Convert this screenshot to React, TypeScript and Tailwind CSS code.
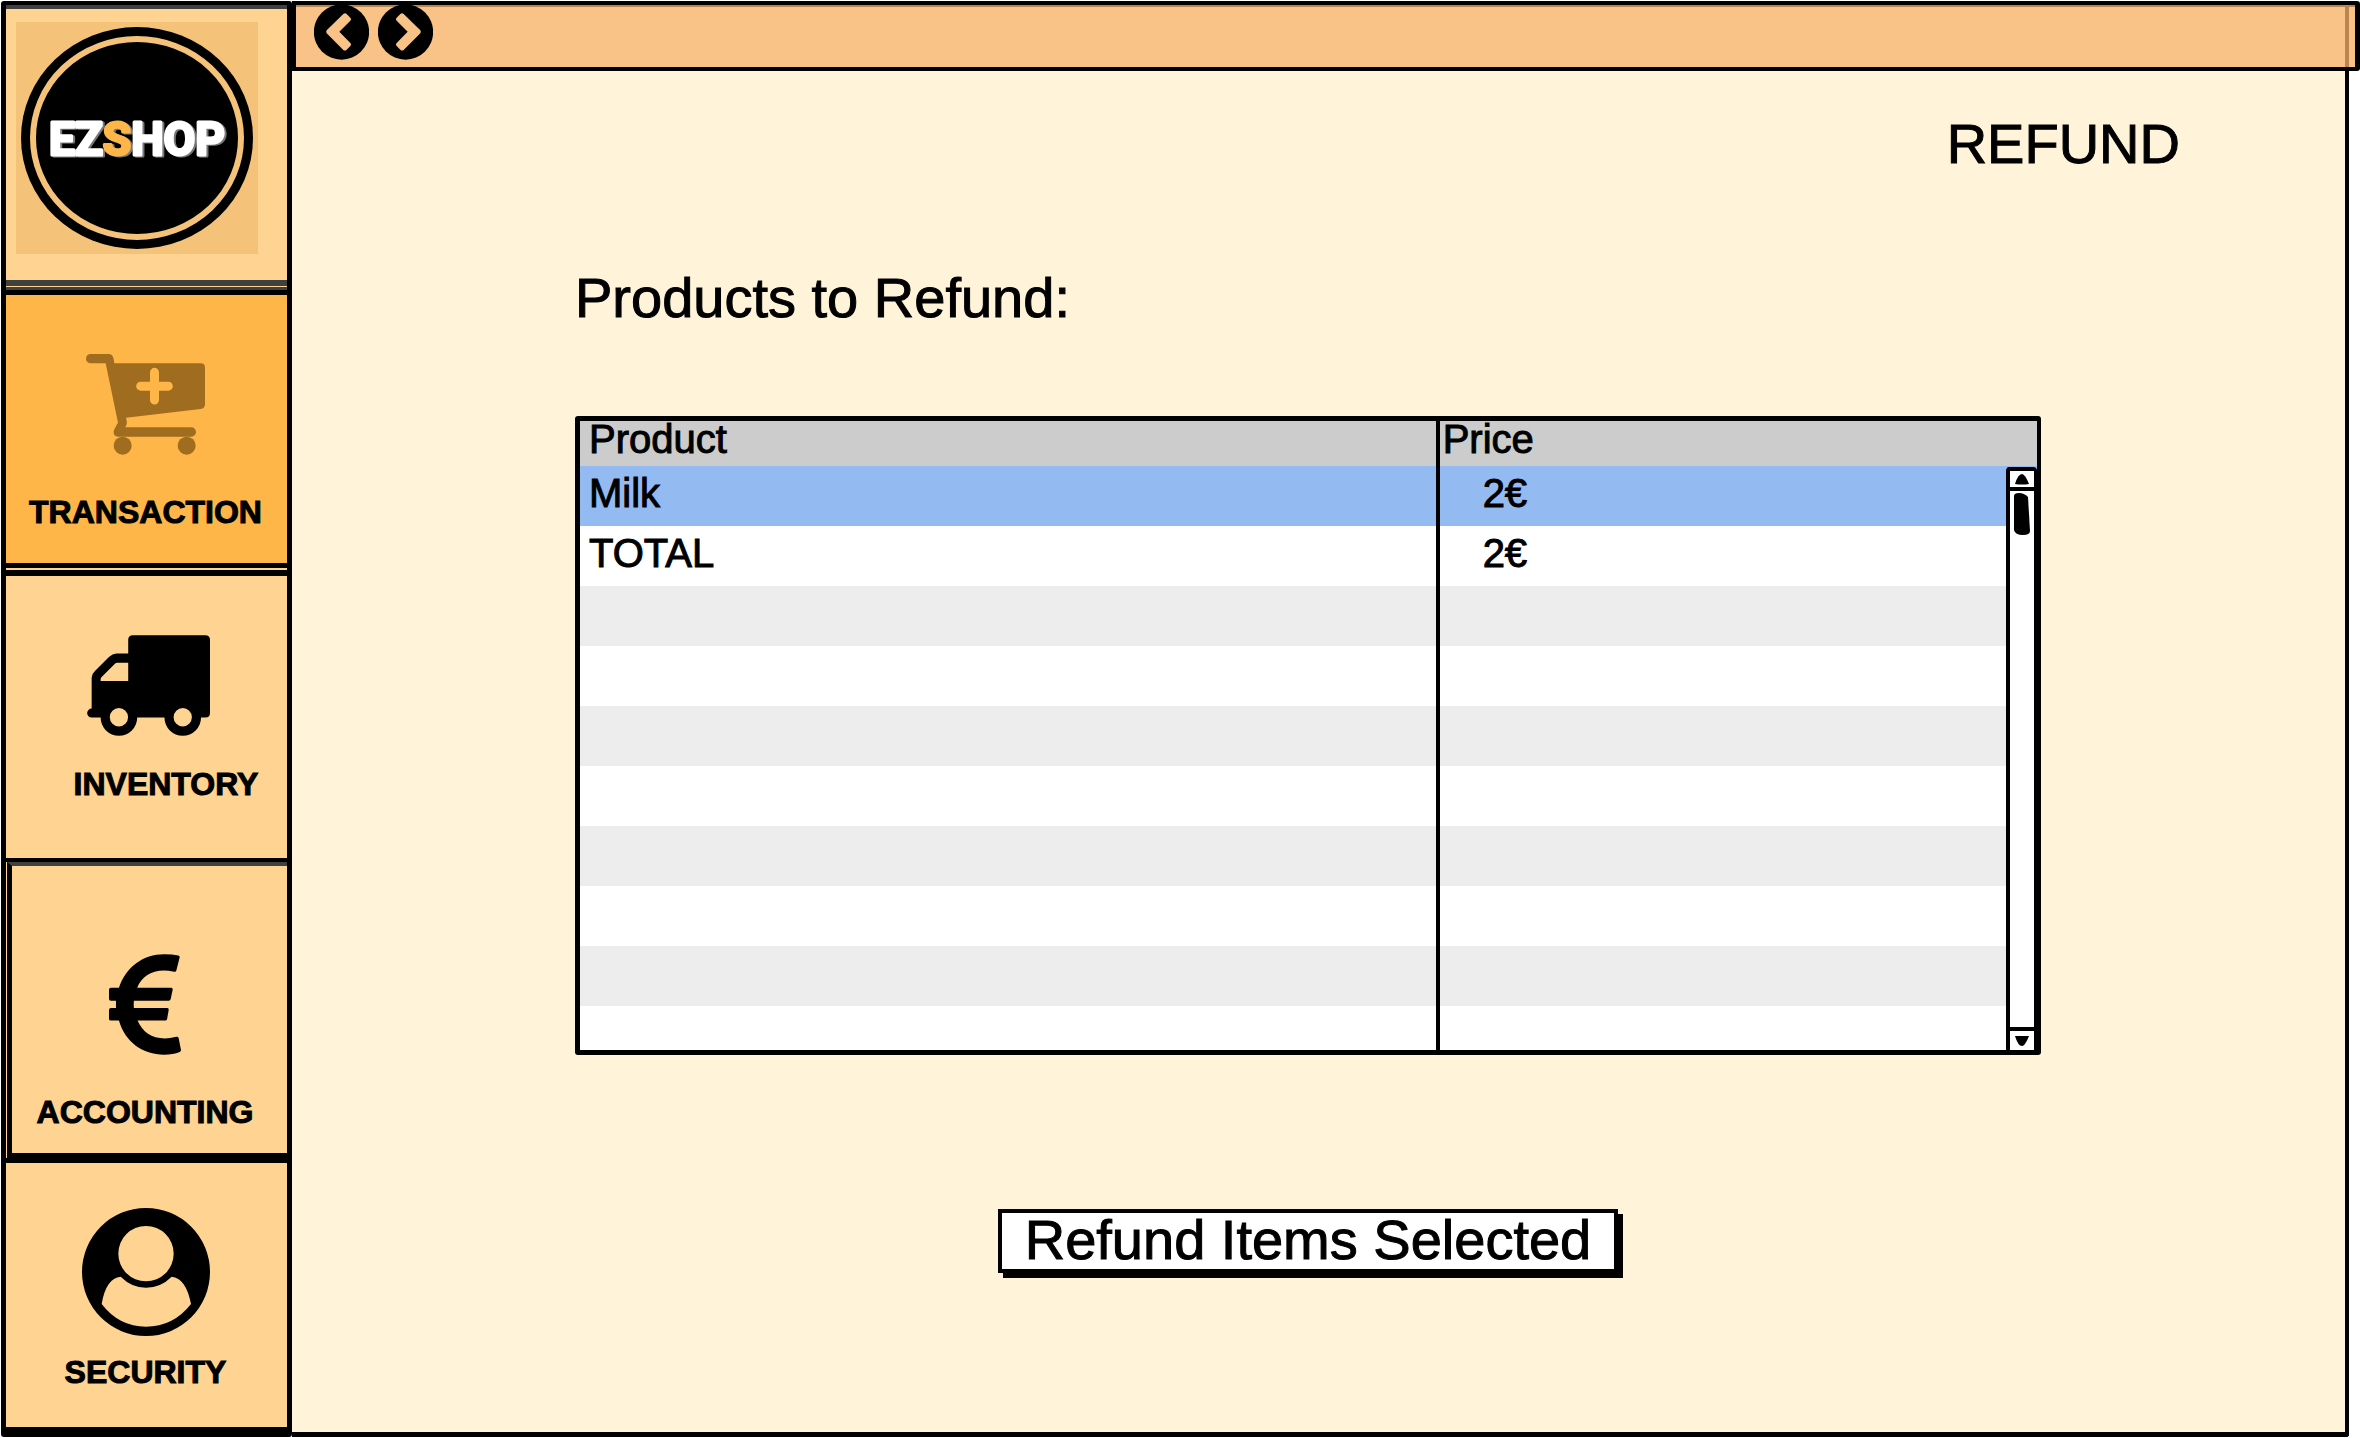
import type { ReactNode } from "react";

function Logo() {
  return (
    <svg viewBox="0 0 242 232" className="h-[232px] w-[242px]" role="img" aria-label="EZSHOP">
      <rect width="242" height="232" fill="#f5c27a" />
      <ellipse cx="121" cy="116" rx="116" ry="111" fill="#000" />
      <ellipse cx="121" cy="116" rx="104" ry="99" fill="none" stroke="#f5c27a" strokeWidth="6" />
      <text
        x="121"
        y="133"
        className="drop-shadow-[2px_1px_0_#77777b]"
        fontFamily="Roboto, 'Liberation Sans', sans-serif"
        fontWeight="700"
        fontSize="46"
        textAnchor="middle"
        strokeWidth="3"
        strokeLinejoin="round"
        fill="#fff"
        stroke="#fff"
      >
        EZ
        <tspan fill="#ffb648" stroke="#ffb648">S</tspan>
        HOP
      </text>
    </svg>
  );
}

function CartIcon() {
  return (
    <svg viewBox="258 253 357 303" className="h-[101px] w-[119px]" fill="#9f6c20" aria-hidden="true">
      <path
        fillRule="evenodd"
        d="M272 253H326Q338 253 341 268L343 281H602Q615 281 615 294V404Q615 416 602 418L378 444Q382 458 380 464L376 473H574a14 14 0 0 1 0 28H354Q341 501 341 487Q341 480 354 459L317 281H272a14 14 0 0 1 0-28zM450 308V336H422a13.500 13.500 0 0 0 0 27H450V391a13.500 13.500 0 0 0 27 0V363H505a13.500 13.500 0 0 0 0-27H477V308a13.500 13.500 0 0 0-27 0z"
      />
      <circle cx="368" cy="528" r="27" />
      <circle cx="560" cy="528" r="27" />
    </svg>
  );
}

function TruckIcon() {
  return (
    <svg viewBox="260 229 370 303" className="h-[101px] w-[123px]" aria-hidden="true">
      <path
        fillRule="evenodd"
        d="M398 229H616Q630 229 630 243V463Q630 477 616 477H603A55 55 0 0 1 493 477H411A55 55 0 0 1 301 477H274a13.500 13.500 0 0 1 0-27V357Q274 346 284 337L326 295Q337 284 348 284H384V243Q384 229 398 229zM384 312H350Q347 312 344 315L304 355Q301 358 301 362V367H384zM328.500 476a27.500 27.500 0 1 0 55 0a27.500 27.500 0 1 0-55 0zM520.500 476a27.500 27.500 0 1 0 55 0a27.500 27.500 0 1 0-55 0z"
      />
    </svg>
  );
}

function EuroIcon() {
  return (
    <svg viewBox="327 315 217 303" className="h-[101px] w-[72px]" aria-hidden="true">
      <path d="M540 324L530 364Q529 369 524 368Q505 364 493 364C452 364 424 385 412 416H515Q519 416 519 421L513 450Q512 455 507 455H402Q401 466 402 477H503Q507 477 507 482L502 511Q501 515 497 515H413C428 549 455 569 495 569Q510 569 530 564Q536 563 537 568L544 604Q544 609 540 610Q520 618 493 618C428 618 376 580 357 515H333Q327 515 327 510V483Q327 477 333 477H348V455H333Q327 455 327 450V422Q327 416 333 416H357C378 353 430 315 493 315Q518 315 536 319Q540 320 540 324z" />
    </svg>
  );
}

function UserIcon() {
  return (
    <svg viewBox="246 205 384 384" className="size-32" aria-hidden="true">
      <path
        fillRule="evenodd"
        d="M246 397a192 192 0 1 0 384 0a192 192 0 1 0-384 0zM355 342a83 83 0 1 0 166 0a83 83 0 1 0-166 0zM305 493Q318 415 362 411Q395 444 438 444Q482 444 515 411Q558 415 573 493Q520 561 438 561Q357 561 305 493z"
      />
    </svg>
  );
}

function ChevronCircle({ flipped = false }: { flipped?: boolean }) {
  return (
    <svg
      viewBox="942 14 165 166"
      className={flipped ? "h-14 w-[55px] -scale-x-100" : "h-14 w-[55px]"}
      aria-hidden="true"
    >
      <circle cx="1024.500" cy="97" r="83" />
      <path
        fill="#f9c387"
        d="M1030 43Q1035 39 1040 43L1051 54Q1056 58 1051 63L1018 96L1051 130Q1056 134 1051 139L1040 150Q1035 155 1030 151L980 101Q977 96 980 92z"
      />
    </svg>
  );
}

function NavItem({ label, icon, className }: { label: string; icon: ReactNode; className: string }) {
  return (
    <button type="button" className={`flex flex-col items-center text-[32px] leading-10 font-bold ${className}`}>
      {icon}
      <span>{label}</span>
    </button>
  );
}

const rows = [
  { product: "Milk", price: "2€", tone: "bg-[#94baf2]" },
  { product: "TOTAL", price: "2€", tone: "bg-white" },
  { product: "", price: "", tone: "bg-[#ededed]" },
  { product: "", price: "", tone: "bg-white" },
  { product: "", price: "", tone: "bg-[#ededed]" },
  { product: "", price: "", tone: "bg-white" },
  { product: "", price: "", tone: "bg-[#ededed]" },
  { product: "", price: "", tone: "bg-white" },
  { product: "", price: "", tone: "bg-[#ededed]" },
];

function ProductTable() {
  return (
    <div className="relative rounded-[3px] border-[5px] border-r-4 border-black bg-white">
      <table className="w-full table-fixed border-separate border-spacing-0 text-left text-[40px]">
        <thead>
          <tr className="h-[45px] bg-[#ccc] align-top leading-9">
            <th scope="col" className="w-[59%] border-r-4 border-black p-0 pl-[9px] font-normal">
              Product
            </th>
            <th scope="col" className="p-0 pl-[3px] font-normal">
              Price
            </th>
          </tr>
        </thead>
        <tbody>
          {rows.map((row, i) => (
            <tr key={i} className={`h-15 align-top leading-[54px] ${row.tone}`}>
              <td className="border-r-4 border-black p-0 pl-[9px]">{row.product}</td>
              <td className="p-0 pl-[43px]">{row.price}</td>
            </tr>
          ))}
          <tr className="h-11 bg-white">
            <td className="border-r-4 border-black p-0" />
            <td className="p-0" />
          </tr>
        </tbody>
      </table>
      <div className="absolute top-[46px] right-0 bottom-0 flex w-[31px] flex-col rounded-t-sm border-t-4 border-r-3 border-l-4 border-black bg-white">
        <button type="button" aria-label="Scroll up" className="flex h-5 items-center justify-center border-b-4 border-black">
          <svg viewBox="0 0 16 12" className="h-3 w-4" aria-hidden="true">
            <path d="M1 11Q4 1 8 1Q11 1 15 11Q8 12 1 11z" />
          </svg>
        </button>
        <div className="flex flex-1 justify-center pt-0.5">
          <svg viewBox="0 0 16 42" className="h-[42px] w-4" aria-hidden="true">
            <path d="M0 3Q0 0 5 0Q10 0 14 4L16 38Q16 42 9 42Q1 42 0 37z" />
          </svg>
        </div>
        <button type="button" aria-label="Scroll down" className="flex h-[23px] items-center justify-center border-t-4 border-black">
          <svg viewBox="0 0 16 12" className="h-3 w-4" aria-hidden="true">
            <path d="M1 1H15Q11 11 8 11Q4 11 1 1z" />
          </svg>
        </button>
      </div>
    </div>
  );
}

export default function App() {
  return (
    <div className="flex min-h-screen bg-white py-px font-['Liberation_Sans',Arial,sans-serif] text-black [-webkit-text-stroke:1px_#000]">
      <aside className="ml-px flex w-[291px] shrink-0 flex-col rounded-[3px] border-x-[5px] border-t-4 border-b-[10px] border-black bg-[#ffd391]">
        <div className="flex h-[285px] flex-col border-t-4 border-[#404040]">
          <div className="pt-[13px] pl-[10px]">
            <Logo />
          </div>
          <div className="mt-auto h-[6px] bg-[#404040]" />
          <div className="mt-px h-[3px] bg-[#404040]" />
        </div>
        <nav className="flex flex-1 flex-col">
          <NavItem
            label="TRANSACTION"
            icon={<CartIcon />}
            className="gap-[37px] border-y-[5px] border-black bg-[#ffb648] pt-[59px] pr-[2px] pb-[31px]"
          />
          <NavItem
            label="INVENTORY"
            icon={<TruckIcon />}
            className="mt-[2px] gap-7 border-t-[6px] border-b-4 border-black pt-[59px] pb-[54px] pl-[3px] [&>span]:pl-9"
          />
          <NavItem
            label="ACCOUNTING"
            icon={<EuroIcon />}
            className="ml-px gap-[37px] border-t-4 border-b-[5px] border-l-[5px] border-t-[#404040] border-b-black border-l-black pt-[88px] pr-[9px] pb-[21px]"
          />
          <NavItem
            label="SECURITY"
            icon={<UserIcon />}
            className="gap-4 border-t-[5px] border-black pt-[45px] pr-[2px] pb-[34px]"
          />
        </nav>
      </aside>

      <div className="flex min-w-0 flex-1 flex-col">
        <header className="relative flex h-[70px] shrink-0 items-start gap-[9px] rounded-r-[3px] border-4 border-r-[5px] border-black bg-[#f9c387] pl-[18px]">
          <div className="absolute inset-x-0 top-0 h-[2px] bg-[#b98652]" />
          <div className="absolute inset-y-0 right-[6px] w-[4px] bg-[#b98652]" />
          <button type="button" aria-label="Back" className="relative -mt-px">
            <ChevronCircle />
          </button>
          <button type="button" aria-label="Forward" className="relative -mt-px">
            <ChevronCircle flipped />
          </button>
        </header>

        <main className="mr-[11px] flex flex-1 flex-col rounded-br-[3px] border-r-4 border-b-[5px] border-black bg-[#fff4d9] pt-[41px] pr-[304px] pl-[283px]">
          <h1 className="-mr-[139px] text-right text-[56px] leading-16">REFUND</h1>
          <h2 className="mt-[90px] text-[56px] leading-16">Products to Refund:</h2>
          <div className="mt-[86px]">
            <ProductTable />
          </div>
          <button
            type="button"
            className="mt-[154px] self-center border-4 border-black bg-white px-[23px] pb-[2px] text-[56px] leading-[54px] shadow-[5px_5px_0_#000]"
          >
            Refund Items Selected
          </button>
        </main>
      </div>
    </div>
  );
}
